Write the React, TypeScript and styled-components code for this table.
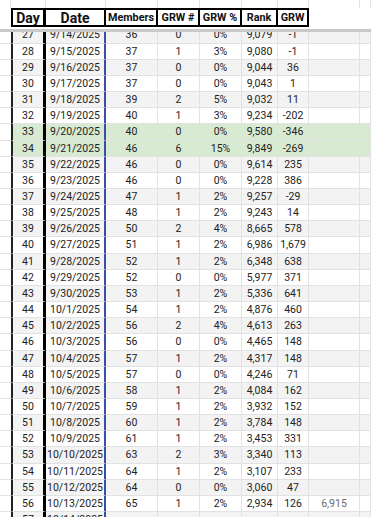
import React from "react";
import styled, { createGlobalStyle } from "styled-components";

const GlobalStyle = createGlobalStyle`
  html, body {
    margin: 0;
    padding: 0;
    background: #fff;
    overflow: hidden;
  }
  * {
    box-sizing: border-box;
  }
`;

const COLS = "11px 35px 60px 52px 42px 42px 36px 31px 51px 1fr";
const ROW_H = 16.17;

const Sheet = styled.div`
  width: 371px;
  height: 517px;
  display: flex;
  flex-direction: column;
  overflow: hidden;
  font-family: Roboto, "Liberation Sans", Arial, sans-serif;
  color: #222;
`;

const TopStrip = styled.div`
  display: grid;
  grid-template-columns: ${COLS};
  height: 8px;
  flex-shrink: 0;
`;

const StripCell = styled.div`
  border-right: 1px solid #e2e2e2;
`;

const HeaderGrid = styled.div`
  display: grid;
  grid-template-columns: ${COLS};
  height: 19px;
  flex-shrink: 0;
`;

const HeadCell = styled.div<{ $big?: boolean; $first?: boolean; $thick?: boolean }>`
  display: flex;
  align-items: center;
  justify-content: center;
  border-top: 2px solid #000;
  border-bottom: 2px solid #000;
  border-right: ${(p) => (p.$thick ? "3px" : "2px")} solid #000;
  border-left: ${(p) => (p.$first ? "2px solid #000" : "none")};
  font-weight: 700;
  font-size: ${(p) => (p.$big ? "14px" : "10.8px")};
  color: #111;
  white-space: nowrap;
  overflow: hidden;
`;

const Blank = styled.div``;

const Gap = styled.div`
  height: 2px;
  flex-shrink: 0;
`;

const FreezeBar = styled.div`
  height: 3px;
  flex-shrink: 0;
  background: #c9c9c9;
`;

const Body = styled.div`
  flex: 1;
  overflow: hidden;
`;

const Rows = styled.div`
  margin-top: -4.6px;
`;

type Tone = "band" | "plain" | "green";

const toneBg: Record<Tone, string> = {
  band: "#f3f3f3",
  plain: "#ffffff",
  green: "#d9ead3",
};

const Row = styled.div<{ $tone: Tone }>`
  display: grid;
  grid-template-columns: ${COLS};
  height: ${ROW_H}px;
  background: ${(p) => toneBg[p.$tone]};
`;

const Cell = styled.div<{ $muted?: boolean }>`
  font-size: 10.5px;
  line-height: ${ROW_H - 1}px;
  text-align: center;
  white-space: nowrap;
  overflow: hidden;
  border-bottom: 1px solid #e2e2e2;
  border-right: 1px solid #e2e2e2;
  color: ${(p) => (p.$muted ? "#6b6b6b" : "#222")};
`;

const EdgeCell = styled(Cell)`
  background: #fff;
  border-right: none;
`;

const DayCell = styled(Cell)`
  border-left: 2px solid #222;
  border-right: 3px solid #000;
`;

const DateCell = styled(Cell)`
  border-right: 2px solid #3a4ea6;
`;

type Entry = [number, string, string, string, string, string, string, string?];

const data: Entry[] = [
  [27, "9/14/2025", "36", "0", "0%", "9,079", "-1"],
  [28, "9/15/2025", "37", "1", "3%", "9,080", "-1"],
  [29, "9/16/2025", "37", "0", "0%", "9,044", "36"],
  [30, "9/17/2025", "37", "0", "0%", "9,043", "1"],
  [31, "9/18/2025", "39", "2", "5%", "9,032", "11"],
  [32, "9/19/2025", "40", "1", "3%", "9,234", "-202"],
  [33, "9/20/2025", "40", "0", "0%", "9,580", "-346"],
  [34, "9/21/2025", "46", "6", "15%", "9,849", "-269"],
  [35, "9/22/2025", "46", "0", "0%", "9,614", "235"],
  [36, "9/23/2025", "46", "0", "0%", "9,228", "386"],
  [37, "9/24/2025", "47", "1", "2%", "9,257", "-29"],
  [38, "9/25/2025", "48", "1", "2%", "9,243", "14"],
  [39, "9/26/2025", "50", "2", "4%", "8,665", "578"],
  [40, "9/27/2025", "51", "1", "2%", "6,986", "1,679"],
  [41, "9/28/2025", "52", "1", "2%", "6,348", "638"],
  [42, "9/29/2025", "52", "0", "0%", "5,977", "371"],
  [43, "9/30/2025", "53", "1", "2%", "5,336", "641"],
  [44, "10/1/2025", "54", "1", "2%", "4,876", "460"],
  [45, "10/2/2025", "56", "2", "4%", "4,613", "263"],
  [46, "10/3/2025", "56", "0", "0%", "4,465", "148"],
  [47, "10/4/2025", "57", "1", "2%", "4,317", "148"],
  [48, "10/5/2025", "57", "0", "0%", "4,246", "71"],
  [49, "10/6/2025", "58", "1", "2%", "4,084", "162"],
  [50, "10/7/2025", "59", "1", "2%", "3,932", "152"],
  [51, "10/8/2025", "60", "1", "2%", "3,784", "148"],
  [52, "10/9/2025", "61", "1", "2%", "3,453", "331"],
  [53, "10/10/2025", "63", "2", "3%", "3,340", "113"],
  [54, "10/11/2025", "64", "1", "2%", "3,107", "233"],
  [55, "10/12/2025", "64", "0", "0%", "3,060", "47"],
  [56, "10/13/2025", "65", "1", "2%", "2,934", "126", "6,915"],
  [57, "10/14/2025", "", "", "", "", ""],
];

const toneFor = (day: number): Tone => {
  if (day === 33 || day === 34) return "green";
  return day % 2 === 1 ? "band" : "plain";
};

const App: React.FC = () => {
  return (
    <Sheet>
      <GlobalStyle />
      <TopStrip>
        {Array.from({ length: 10 }).map((_, i) => (
          <StripCell key={i} />
        ))}
      </TopStrip>
      <HeaderGrid>
        <Blank />
        <HeadCell $big $first $thick>
          Day
        </HeadCell>
        <HeadCell $big>Date</HeadCell>
        <HeadCell>Members</HeadCell>
        <HeadCell>GRW #</HeadCell>
        <HeadCell>GRW %</HeadCell>
        <HeadCell>Rank</HeadCell>
        <HeadCell>GRW</HeadCell>
        <Blank />
        <Blank />
      </HeaderGrid>
      <Gap />
      <FreezeBar />
      <Body>
        <Rows>
          {data.map(([day, date, members, num, pct, rank, grw, extra]) => (
            <Row key={day} $tone={toneFor(day)}>
              <EdgeCell />
              <DayCell>{day}</DayCell>
              <DateCell>{date}</DateCell>
              <Cell>{members}</Cell>
              <Cell>{num}</Cell>
              <Cell>{pct}</Cell>
              <Cell>{rank}</Cell>
              <Cell>{grw}</Cell>
              <Cell $muted>{extra ?? ""}</Cell>
              <Cell />
            </Row>
          ))}
        </Rows>
      </Body>
    </Sheet>
  );
};

export default App;
